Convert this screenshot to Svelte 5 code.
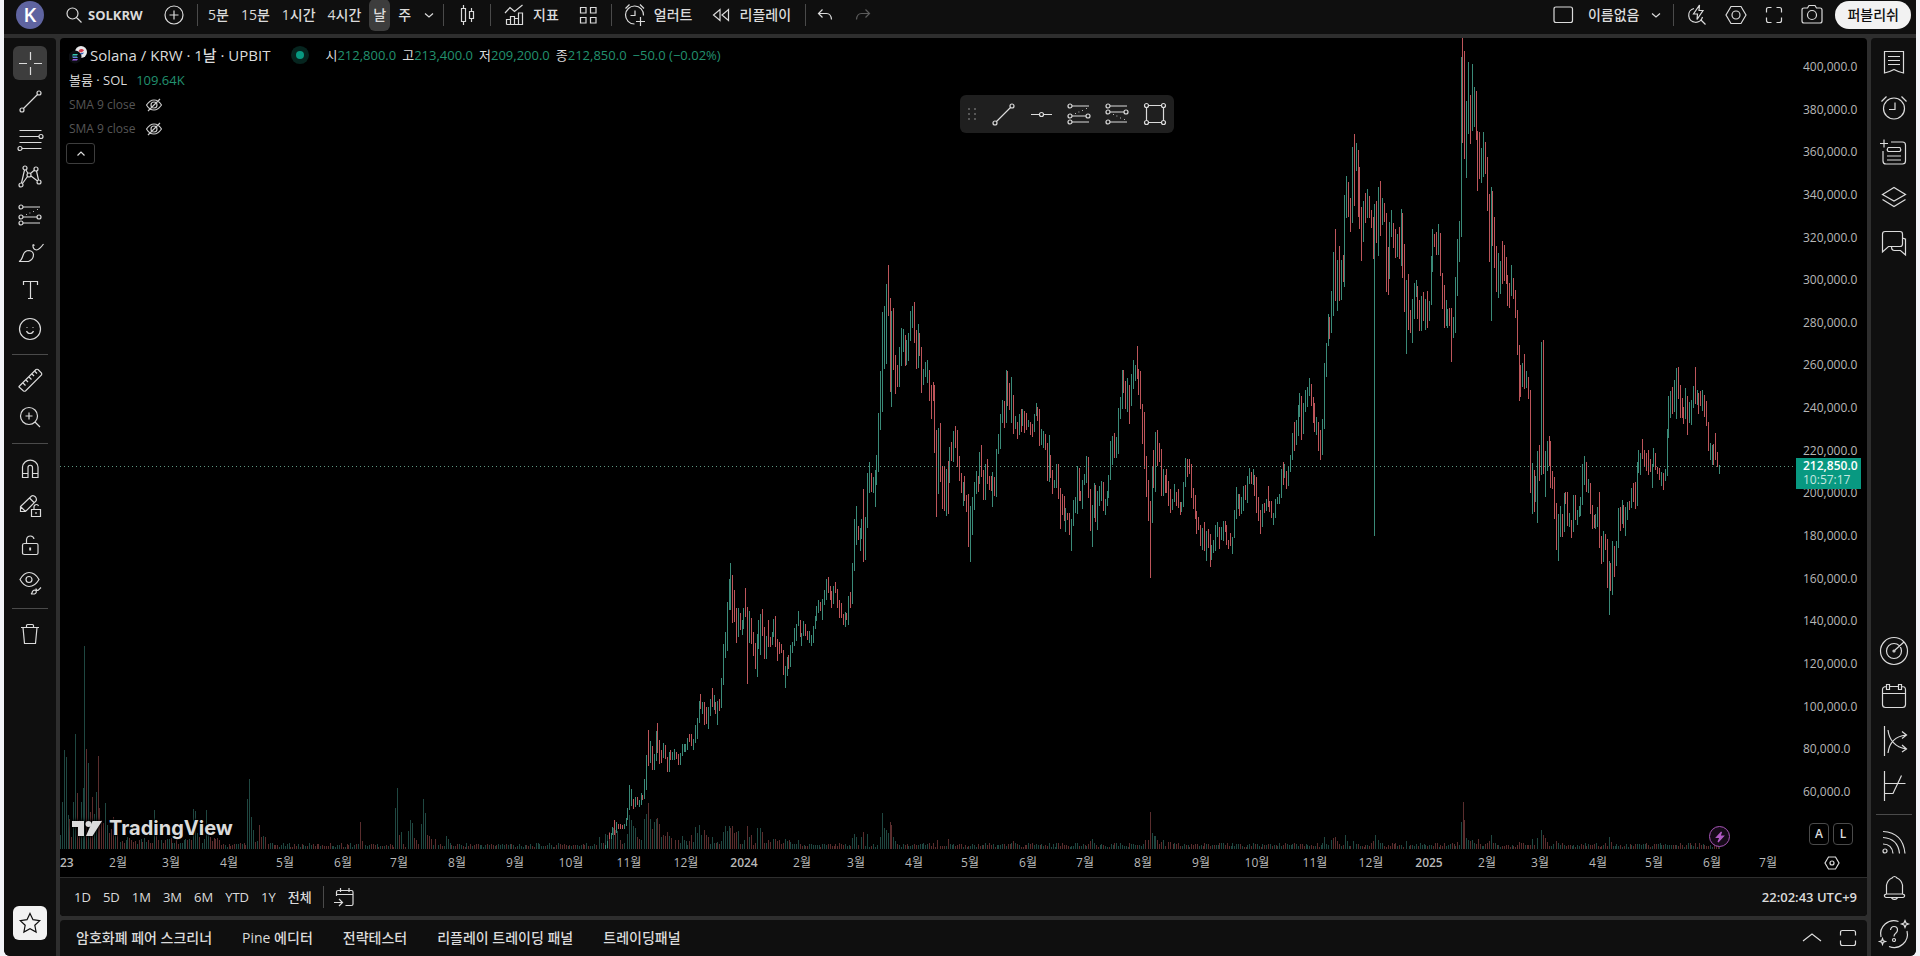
<script lang="ts">
  // circle as a path, so every icon can stay a single "d"
  const c = (x: number, y: number, r: number) =>
    `M${x - r} ${y}a${r} ${r} 0 1 0 ${r * 2} 0a${r} ${r} 0 1 0 ${-r * 2} 0`;

  const icons: Record<string, string> = {
    search: c(12.5, 12.5, 5.5) + 'M16.5 16.5l5 5',
    plus: c(14, 14, 9) + 'M14 9.5v9M9.5 14h9',
    chevronDown: 'M10 12.5l4 3.5l4-3.5',
    chevronUp: 'M10.5 15.5l3.5-3.5l3.5 3.5',
    chevronUpWide: 'M5 17l9-7l9 7',
    candles: 'M8.5 7.5h4v13h-4zM10.5 4v3.5M10.5 20.5v3.5M16.5 10.5h4v7h-4zM18.5 7v3.5M18.5 17.5v3.5',
    indicators: 'M5 12l5-5.5l4.5 4l8-6.5M6.5 23.5v-5h4v5M10.5 23.5v-8h4v8M14.5 20.5v-3h4v6M18.5 17.5v-5.5h4v11.5h-16',
    grid: 'M6.5 6.5h5.5v5.5h-5.5zM16.5 6.5h5.5v5.5h-5.5zM6.5 16.5h5.5v5.5h-5.5zM16.5 16.5h5.5v5.5h-5.5z',
    alarmPlus: 'M22.5 14.5a9 9 0 1 0-9 8.5M9.5 14.5h4.5v-5M4.5 7.5l4-4M19 3.5l4 4M19.5 16v9M15 20.5h9',
    rewind: 'M13 8.5v11l-6.5-5.5zM21.5 8.5v11l-6.5-5.5z',
    undo: 'M11.5 8.5l-4 4l4 4M7.5 12.5h8q4.500 0 5 6',
    redo: 'M16.500 8.500l4 4l-4 4M20.500 12.500h-8q-4.500 0-5 6',
    layout: 'M7 6h14.500q2 0 2 2v11.500q0 2-2 2h-14.500q-2 0-2-2v-11.500q0-2 2-2z',
    quick: 'M12 7.5a7 7 0 1 0 8.500 8.500M18.500 18.500l5 5M17.500 4l-6 9h4l-.5 5.500l6-9h-4z',
    hexagon: 'M9 5.500h10l5 8.500l-5 8.500h-10l-5-8.500z' + c(14, 14, 4),
    fullscreen: 'M6.500 11.500v-3q0-2 2-2h3M16.500 6.500h3q2 0 2 2v3M21.500 16.500v3q0 2-2 2h-3M11.500 21.500h-3q-2 0-2-2v-3',
    camera: 'M9.500 7l1.500-2.500h6l1.500 2.500h3.500q2 0 2 2v11q0 2-2 2h-16q-2 0-2-2v-11q0-2 2-2z' + c(14, 14, 4.5),
    cross: 'M14.500 3v8M14.500 18v8M3 14.500h8M18 14.500h8',
    line: c(6, 23, 2) + c(23, 6, 2) + 'M7.500 21.500l14-14',
    hline: 'M4 14.500h8M17 14.500h8' + c(14.5, 14.5, 2),
    rays: 'M3.500 5.500h22M3.500 11.500h19.500M3.500 17.500h22M6 23.500h19.500' + c(25, 11.5, 2) + c(4, 23.5, 2),
    pattern: c(9, 5, 2) + c(20, 6, 2) + c(13, 12, 2) + c(5, 22, 2) + c(23, 19, 2) +
      'M8.500 7l-3 13M10 7l2 3.500M11.500 13.500l-5 7M14.500 10.500l4-3.500M20.500 8l2 9M15 13l6.500 5',
    forecast: c(5, 6, 2) + c(5, 16, 2) + c(5, 22, 2) + c(23, 16, 2) + 'M7 6h17M7 16h14M7 22h17M10 13.500h.8M13.500 12h.8M17 10.500h.8M21 8.500h.8',
    forecastDown: c(5, 6, 2) + c(5, 12, 2) + c(5, 22, 2) + c(23, 12, 2) + 'M7 6h17M7 12h14M7 22h17M10 14.500h.8M13.500 16h.8M17 18h.8M21 19.500h.8',
    rect: c(5.5, 5.5, 2) + c(22.5, 5.5, 2) + c(5.5, 22.5, 2) + c(22.5, 22.5, 2) + 'M7.500 5.500h13M7.500 22.500h13M5.500 7.500v13M22.500 7.500v13',
    brush: 'M3 22.500q2.500-1 4-6q1.500-5 6-5q4 .5 4.500 4q0 5-5 7zM17 5.500q-.5 5 3.500 5.500q3-.5 7-6M17 5.500l1.500 1',
    text: 'M7.500 8v-3.500h14v3.500M14.500 4.500v17M12 21.500h5',
    smile: c(14, 14, 10.5) + 'M11 12v.8M17 12v.8M10.500 16q1 2.500 3.500 2.500q2.500 0 3.500-2.500',
    ruler: 'M3 20.500l17-17q1-.5 2 0l3.500 3.500q.5 1 0 2l-16 16q-1 .5-2 0l-4.500-4zM7 17l2.500 2.500M10 14l2 2M13 11l2.500 2.500M16 8l2 2M19 5.500l2 2',
    zoom: c(13, 12, 8.5) + 'M19 18l5 5M13 8.500v7M9.500 12h7',
    magnet: 'M6.500 22.500v-10.500a7.800 7.800 0 0 1 15.500 0v10.500h-5.500v-10a2.200 2.200 0 0 0-4.500 0v10zM6.500 18.500h5.500M16.500 18.500h5.500',
    pencilLock: 'M4.500 18.500v-5l11-10.500q2-1 4 1q1.500 2 .5 4l-10.500 10.500zM4.500 13.500l5 5M13.500 5l4.500 4.500M15.500 16.500h9v7h-9zM18 16.500v-3q.5-2 2.500-2q1.500 0 2 1.500M20 19v2',
    lock: 'M8.500 12.500h12q1.500 0 1.500 1.500v8q0 1.500-1.500 1.500h-12q-2 0-2-1.500v-8q0-1.500 2-1.500zM10.500 12.500v-4q.5-3.500 4-3.500q3 0 3.500 3M14.500 16.500v3M13.800 16.500v3',
    eye: 'M4 10.500q4-7 9-7q6 0 10 7q-4 7-10 7q-5 0-9-7z' + c(13, 10.5, 3) + 'M15 25q1-.5 1.500-2.500q1-2 3.500-1q1 2.500-1.500 3.500zM20 19.500q0 2 2 2l3-3',
    trash: 'M5 7.500h18M7 7.500l1.500 16h11l1.500-16M10.500 7.500v-2q0-1 1-1h5q1 0 1 1v2',
    star: 'M14 4.500l3 6.200l6.700 .9l-4.900 4.600l1.300 6.800l-6.100-3.300l-6.100 3.300l1.300-6.800l-4.900-4.600l6.700-.9z',
    eyeOff: 'M6.500 14q3.500-5 7.500-5q4.500 0 7.500 5q-3.500 5-7.500 5q-4.500 0-7.500-5z' + c(14, 14, 3) + 'M8 20l12-12',
    goTo: 'M6.500 13v-4q0-1.500 1.500-1.500h13.500q1.500 0 1.500 1.500v12q0 1.500-1.500 1.500h-6M6.500 11.500h16.500M10.500 5v4M19 5v4M4 19.500h8M9 16l3.500 3.500l-3.500 3.500',
    watchlist: 'M4.500 2.500h19v21.500q-5-1-9.500-3.500q-4.500 2.500-9.500 3.500zM8 7.500h12M8 11.500h12M8 15.500h12',
    alarm: c(14, 14.5, 10.5) + 'M9 15.500h6v-7M1.500 7.500l5-5M21.500 2.500l5 5',
    news: 'M11 3h11.500q3 0 3 3v16q0 3-3 3h-16.500q-3 0-3-3v-10M4 .5v8M0 4.500h8M8 8.500h12q1.500 2 0 4h-12q-1.500-2 0-4M7 17h14M7 21h14',
    layers: 'M2.500 10.500l11.500-7l11.500 7l-11.500 6.500zM2.500 15.500l11.500 7l11.500-7',
    chat: 'M2.500 23v-18q0-2.500 2.500-2.500h15q2.500 0 2.500 2.500v10q0 2.500-2.500 2.500h-11.500zM25.500 9.500v16.500l-5-4.500h-6q-3 0-3-4M22.500 9.500q3-.5 3 2',
    target: c(14, 14, 13.5) + c(14, 14, 7.5) + 'M15 13l9-8' + c(14, 14, 1),
    calendar: 'M2.500 11.500h23M6.500 4.500q-4 0-4 3v15q0 3 3 3h17q3 0 3-3v-15q0-3-4-3M10 4.500h8M6.500 2.500h3v5h-3zM18.500 2.500h3v5h-3z',
    curves: 'M4.500-1v30M8 26q2-16 18-18M22 4.500l4.500 3.500l-4.500 3.500M8 3q2 16 18 19M22 18l4.500 4l-4.500 3',
    step: 'M4.500-1v30M4.500 11.500h21M4.500 21.500h8.500l8.500-18',
    feed: c(5, 21, 2) + 'M3 14q9 0 10 9.500M3 7.500q15 1 16.500 16M3 1.500q20 1 22 22',
    bell: 'M6.500 19v-9q1-5 5.500-7q2.500-3 5 0q4.500 2 5.500 7v9l2 1q.5 2-1.500 2.500h-17q-2-.5-1.500-2.500zM6.500 19h16M11.500 23q3 3 6 0',
    help: 'M18.500 1.500a13.300 13.300 0 0 0-17.500 15.500M9 26.500a13.300 13.300 0 0 0 18-15.500M10.500 10q.5-3.500 3.500-3.500q3.500 0 3.500 3.500q0 2-2 3.500q-1.500 1-1.500 3' + c(14, 20, 1.5) +
      'M25 .5l1 2.500l2.500 1l-2.500 1l-1 2.500l-1-2.500l-2.500-1l2.500-1zM2.500 18.500l.8 2.200l2.200 .8l-2.200 .8l-.8 2.200l-.8-2.200l-2.200-.8l2.200-.8z',
    maximize: 'M6.500 11.500v-3q0-2 2-2h11q2 0 2 2v3M21.500 16.500v3q0 2-2 2h-11q-2 0-2-2v-3',
    gear: 'M10.500 8h7l3.500 6l-3.500 6h-7l-3.500-6z' + c(14, 14, 2),
    bolt: 'M15.500 9l-5 5.500h3.500l-2 4.500l5.500-6h-3.500z'
  };

  const intervals = ['5분', '15분', '1시간', '4시간', '날', '주'];
  const drawTools = [
    ['line', 'rays', 'pattern', 'forecast', 'brush', 'text', 'smile'],
    ['ruler', 'zoom'],
    ['magnet', 'pencilLock', 'lock', 'eye'],
    ['trash']
  ];
  const favorites = ['line', 'hline', 'forecast', 'forecastDown', 'rect'];
  const sideTop = ['watchlist', 'alarm', 'news', 'layers', 'chat'];
  const sideMid = ['target', 'calendar', 'curves', 'step'];
  const sideEnd = ['feed', 'bell', 'help'];
  const ranges = ['1D', '5D', '1M', '3M', '6M', 'YTD', '1Y', '전체'];
  const tabs = ['암호화폐 페어 스크리너', 'Pine 에디터', '전략테스터', '리플레이 트레이딩 패널', '트레이딩패널'];
  const ohlc = [['시', '212,800.0'], ['고', '213,400.0'], ['저', '209,200.0'], ['종', '212,850.0']];
  let interval = $state('날');

  const prices: string[] = [];
  for (let p = 400000; p >= 60000; p -= 20000) prices.push(p.toLocaleString('en-US') + '.0');

  // time axis: days since 2023-01-01
  const dayWidth = 1.873;
  const months: { label: string; x: number; year: boolean }[] = [];
  for (let m = 0; m <= 30; m++) {
    const days = (Date.UTC(2023, m, 1) - Date.UTC(2023, 0, 1)) / 86400000;
    const year = m % 12 === 0;
    months.push({ label: year ? String(2023 + m / 12) : (m % 12) + 1 + '월', x: Math.round(days * dayWidth), year });
  }

  // high-low bars between two x anchors, g = up, r = down
  const segments = [
    { from: 605, to: 852, bars: 'g845-849 g841-848 r833-839 g833-839 g827-835 r820-835 g822-833 r824-829 r824-829 r825-829 g824-829 g818-826 g808-820 g785-810 g789-806 r799-809 g797-807 r797-805 g800-807 g793-805 r795-800 g779-799 g755-790 r730-766 g741-763 r746-770 g754-770 g731-761 r723-753 r740-764 r750-763 g743-758 r745-759 r757-772 g752-772 r750-760 g752-760 g749-760 r752-759 r754-765 g753-765 g744-756 g744-752 g744-752 g738-750 r734-742 r734-746 g739-750 g725-743 g718-739 g701-723 r694-709 g702-714 r702-725 r707-724 g707-729 g699-716 r688-707 g695-710 r702-714 g701-725 r699-711 g678-708 g644-685 g632-658 g602-651 g579-610 g563-610 r575-623 r590-622 r608-643 g608-637 r613-630 g620-635 g608-629 r588-617 r607-684 g611-643 r618-644 r632-656 r643-669 g634-677 g620-649 g614-655 r609-636 r627-659 g636-659 r620-647 r637-647 g632-645 g619-637 r616-647 r639-661 r642-654 r644-653 r650-675 g666-688 g657-676 r655-669 g645-667 g642-653 g628-646 g624-641 g611-626 r620-637 g633-646 g621-636 r624-636 r631-640 g631-643 g635-646 g626-643 g616-629 g606-621 g600-613 r602-611 g599-620 g590-605 g579-600 r577-593 r586-600 r591-608 g586-604 r582-593 r589-608 r600-618 r603-618 r614-625 g612-627 r613-620 g596-625 r592-608 g563-604' },
    { from: 854, to: 1290, bars: 'g519-571 g506-545 r526-540 g528-551 g519-539 r489-562 g517-560 g473-528 g462-493 r473-492 g477-493 g470-507 g455-485 g413-472 g371-430 g312-412 g306-369 g284-364 r265-316 r298-392 g311-407 r308-370 r355-394 r365-387 g347-387 g328-366 g329-352 r335-366 g340-365 g333-361 g311-341 g306-328 r302-343 r330-369 g324-368 r333-356 r347-393 g369-385 g362-377 g360-383 r370-401 r385-419 r382-401 r385-453 r430-517 g428-494 r423-482 r466-509 r467-511 g469-516 r461-514 g447-483 r442-461 g431-462 r426-448 r430-467 r456-481 r473-493 g482-506 r476-501 r495-512 r494-547 g506-562 g497-535 g482-510 g471-494 r476-492 g452-484 r445-477 r470-500 g464-500 r459-484 r476-490 r476-491 g472-507 r477-496 g449-497 g434-454 g414-449 g400-423 r401-428 g370-423 r371-406 r383-410 g377-423 r395-434 g416-429 r422-439 g414-435 r409-432 g409-426 r411-433 r413-430 g420-427 r422-435 r424-437 g414-432 g403-416 r407-421 r409-446 g429-445 g431-448 r434-450 r443-481 g435-482 r455-478 r470-494 g480-488 g464-488 r464-499 r488-529 r494-515 r496-521 g508-532 r513-520 r513-535 g519-551 g500-526 g497-513 g466-514 r468-501 r491-501 g480-509 g474-485 g456-483 r457-498 r489-531 g505-547 g483-518 r485-522 g491-530 g486-506 g481-501 r482-511 g499-515 g491-506 g475-498 g441-480 g436-465 r433-458 g437-458 g408-454 g397-419 g370-409 r370-393 r381-409 g378-412 r385-424 g374-406 g360-389 g365-381 r346-379 r369-395 r371-409 r404-444 r412-469 r456-497 r480-521 r501-578 g466-523 r450-488 g432-492 r430-466 r443-462 r449-496 g469-496 r475-493 r469-493 r481-506 r489-513 g499-510 g484-502 r492-506 r489-508 r502-515 g502-512 g482-507 g458-487 r459-477 r459-474 r464-498 r488-509 r495-519 r511-534 r517-530 r525-546 g528-550 r522-551 g531-561 r529-548 r534-567 g545-560 g540-553 g525-551 g522-537 r527-549 g527-540 g521-541 r521-532 r525-545 r540-549 r533-546 g537-554 g510-538 g487-519 g494-509 r494-516 g497-514 g486-511 r485-500 g476-503 g468-484 r472-484 g469-485 r475-496 r477-513 r497-521 r510-534 g504-527 r503-513 g499-511 r486-507 r501-512 r501-518 g513-525 g499-518 g497-504 g494-504 g469-498 r462-485 g464-478 r471-489 g467-486 g455-472' },
    { from: 1292, to: 1719, bars: 'g433-460 r422-451 g420-445 g405-436 g393-417 r396-440 g403-434 g390-412 g387-407 g378-396 r384-406 r397-423 r403-432 g417-435 r422-451 r430-460 g419-455 g363-429 g343-377 g314-346 r317-339 g291-333 g252-316 r229-301 g260-311 r246-301 g260-300 r255-282 g195-287 g176-218 r182-217 r198-232 g147-223 r134-206 g143-171 r150-217 r167-229 r207-261 g201-242 r193-223 g189-218 r196-218 r210-228 r217-259 g204-536 r201-243 g187-256 r181-236 g198-225 r203-222 r213-292 r247-295 g222-279 g210-237 r223-248 r229-258 g234-257 r227-259 g209-266 r213-278 r244-312 g280-354 r274-330 r310-333 g299-343 g283-319 g280-297 r286-319 r300-331 g296-331 r292-321 g299-330 r291-328 g301-321 g256-305 g229-272 r234-247 r232-255 g224-255 r233-276 r273-309 r285-328 g300-326 g309-328 r308-326 r308-362 g317-338 g277-333 g239-296 g221-262 g57-237 r38-143 r51-159 g101-178 g62-134 r95-144 g64-131 g87-127 r91-140 r131-191 r132-179 g148-183 g132-177 r142-174 r157-211 r194-262 g187-321 r191-246 r217-268 r246-292 g253-298 g261-294 r241-284 r245-281 r257-284 r275-306 r283-308 g265-296 r278-299 r290-318 r310-355 r345-401 r365-397 g363-387 r354-389 g371-388 r377-399 r390-493 g463-514 r470-512 g476-502 g451-523 r445-481 g342-475 r340-474 g451-497 g441-471 r436-466 r441-488 r471-489 r477-519 r503-550 g514-561 g506-537 r514-537 g493-532 r492-504 r492-526 g513-527 r520-538 g495-532 r495-520 g510-525 g506-517 g497-516 g464-505 g456-485 r462-492 g479-493 r483-514 r505-529 r515-528 g514-529 g507-527 r492-548 r536-564 g531-562 r534-550 r539-588 g561-615 r563-591 g541-595 r546-577 g541-566 g508-548 r507-531 g500-524 r505-528 g507-536 g502-520 r501-510 g488-508 r483-502 r482-509 g462-506 g450-473 g453-475 r439-459 r450-466 r453-471 r450-475 r459-472 g464-488 g448-467 r453-470 r467-474 r468-480 g472-486 r473-490 g469-481 g429-476 g396-438 g391-418 r387-414 g380-412 g368-419 r367-399 r385-418 r398-418 r407-424 g388-419 r396-435 g402-423 g400-425 g386-408 r367-404 g390-405 r393-414 r391-406 g390-411 r395-417 r401-426 r422-451 g443-460 g445-465 r444-465 r433-460 r452-467 g465-474' }
  ];

  const bars = segments.flatMap(({ from, to, bars }) => {
    const list = bars.split(' ');
    const step = (to - from) / (list.length - 1);
    return list.map((b, i) => {
      const [high, low] = b.slice(1).split('-').map(Number);
      return { x: Math.round(from + i * step), high, low, up: b[0] === 'g' };
    });
  });

  // volume peaks as x:height, the quiet days in between stay low
  const peaks = 'g60:14 g62:47 g64:99 g66:92 g68:34 r69:30 r71:12 g73:47 g75:115 r77:56 r79:29 g81:47 g83:61 g84:203 r86:100 g88:86 r90:37 r92:52 g94:35 g96:57 r98:93 r99:41 r101:29 r103:26 g105:46 g107:24 r109:16 r111:20 r113:32 g115:22 r117:15 g154:39 r156:14 r158:9 g193:40 g195:38 g197:16 r199:12 g206:39 g208:15 r210:12 g247:50 g249:70 g251:32 g253:19 r255:7 g257:8 r259:24 r261:12 g263:13 r265:12 r360:27 r362:8 g395:41 g397:61 r399:14 g401:17 g408:18 g410:29 g412:26 r414:11 r416:9 g421:25 g423:50 g425:36 r427:14 r429:13 r431:10 r435:10 g446:13 g448:10 g599:12 g605:15 g607:14 r609:17 g611:13 g613:21 r615:19 g617:18 g627:15 g629:34 g631:29 g633:23 g635:21 r637:12 r639:10 g641:9 g644:30 g646:35 r648:46 g650:30 r652:20 g654:27 g656:30 r657:31 r659:25 g661:12 r663:14 r665:13 r667:17 g669:13 r671:11 r675:9 g682:13 r691:14 g695:22 g697:16 g699:24 g701:14 r704:19 r706:14 r708:12 g712:12 g723:17 g725:23 g727:18 g729:23 r730:21 r732:23 r734:16 r736:17 g738:18 r747:23 g749:12 r751:14 g757:21 g760:21 r762:17 g773:10 g852:11 g854:15 g856:12 g861:12 r863:17 g867:15 g880:12 g882:36 g884:21 g886:19 g888:16 r890:27 r891:24 g893:12 g895:8 r937:9 r948:10 r1013:8 r1090:8 g1092:10 r1145:9 r1148:9 r1150:37 g1152:16 g1154:13 g1155:13 r1157:9 r1161:7 g1163:9 r1168:7 r1170:7 g1324:12 g1331:9 r1333:11 r1335:12 r1337:8 g1345:14 g1347:8 g1353:8 r1373:8 g1375:14 g1378:9 g1380:6 g1406:8 r1457:7 g1461:27 r1463:47 r1464:29 g1466:11 g1468:9 r1470:8 g1472:9 r1478:10 r1489:8 g1491:14 r1493:6 r1519:7 g1532:10 g1537:11 g1541:19 r1543:14 r1545:11 r1547:7 r1556:8 g1609:12 r1611:7 r1695:6'
    .split(' ')
    .map((p) => {
      const [x, h] = p.slice(1).split(':').map(Number);
      return { x, h, up: p[0] === 'g' };
    });

  const volume = [...peaks];
  for (let d = 0; d < 887; d++) {
    const x = Math.round(60 + d * dayWidth);
    if (peaks.some((p) => Math.abs(p.x - x) < 2)) continue;
    const n = Math.abs(Math.sin(d * 12.9898) * 43758.5453) % 1;
    const base = x < 220 ? 5 : x > 600 && x < 800 ? 4 : 2;
    const bar = bars.find((b) => b.x === x);
    volume.push({ x, h: base + Math.round(n * (base + 2)), up: bar ? bar.up : (n * 10) % 1 > 0.5 });
  }
</script>

{#snippet icon(name: string)}
  <svg class="icon" viewBox="0 0 28 28" aria-hidden="true"><path d={icons[name]} /></svg>
{/snippet}

<div class="page">
  <header>
    <button class="profile" aria-label="Profile"><span class="avatar">K</span></button>
    <button class="symbol">{@render icon('search')}SOLKRW</button>
    <button class="tool" aria-label="Compare">{@render icon('plus')}</button>
    <i class="sep"></i>
    <div class="intervals">
      {#each intervals as item}
        <button class:active={item === interval} onclick={() => (interval = item)}>{item}</button>
      {/each}
    </div>
    <button class="more" aria-label="More intervals">{@render icon('chevronDown')}</button>
    <i class="sep"></i>
    <button class="tool" aria-label="Chart type">{@render icon('candles')}</button>
    <i class="sep"></i>
    <button class="labeled">{@render icon('indicators')}지표</button>
    <button class="tool" aria-label="Templates">{@render icon('grid')}</button>
    <i class="sep"></i>
    <button class="labeled">{@render icon('alarmPlus')}얼러트</button>
    <button class="labeled replay">{@render icon('rewind')}리플레이</button>
    <i class="sep"></i>
    <button class="history" aria-label="Undo">{@render icon('undo')}</button>
    <button class="history" aria-label="Redo" disabled>{@render icon('redo')}</button>
    <div class="spacer"></div>
    <button class="layout" aria-label="Layout">{@render icon('layout')}</button>
    <button class="name">이름없음</button>
    <button class="more last-more" aria-label="Manage layouts">{@render icon('chevronDown')}</button>
    <i class="sep"></i>
    <button class="quick" aria-label="Quick search">{@render icon('quick')}</button>
    <button class="history" aria-label="Settings">{@render icon('hexagon')}</button>
    <button class="history" aria-label="Fullscreen">{@render icon('fullscreen')}</button>
    <button class="history" aria-label="Snapshot">{@render icon('camera')}</button>
    <button class="publish">퍼블리쉬</button>
  </header>

  <div class="body">
    <nav class="draw">
      <button class="tool-btn" aria-label="cross"><span class="picked">{@render icon('cross')}</span></button>
      {#each drawTools as group, i}
        {#if i > 0}<hr />{/if}
        {#each group as name}
          <button class="tool-btn" aria-label={name}>{@render icon(name)}</button>
        {/each}
      {/each}
      <button class="tool-btn star" aria-label="Favorites"><span>{@render icon('star')}</span></button>
    </nav>

    <main>
      <section class="chart">
        <div class="plot">
          <div class="pane">
            <svg class="series" shape-rendering="crispEdges" aria-hidden="true">
              <g transform="translate(-60 -38)">
                {#each volume as v}
                  <rect class={v.up ? 'vol-up' : 'vol-down'} x={v.x} y={849 - v.h} width="1" height={v.h} />
                {/each}
                {#each bars as b}
                  <rect class={b.up ? 'up' : 'down'} x={b.x} y={b.high} width="1" height={b.low - b.high} />
                {/each}
              </g>
            </svg>
            <div class="price-line"></div>

            <div class="legend">
              <div class="title">
                <svg class="coins" viewBox="0 0 20 18" aria-hidden="true">
                  <circle cx="12" cy="6" r="6" fill="#e8e8ea" />
                  <path d="M9.500 5.500a3 3 0 0 1 5.500-1l-2.500 2z" fill="#d33a4c" />
                  <path d="M10 7.500a3 3 0 0 0 5-1l-2.500 .5z" fill="#2f5fb3" />
                  <circle cx="6" cy="11" r="6.500" fill="#0b0d12" />
                  <path d="M4 8h5l-1 1.500h-5z" fill="#35c6b0" />
                  <path d="M3 10.500h5l1 1.500h-5z" fill="#5b8fd6" />
                  <path d="M4 13h5l-1 1.500h-5z" fill="#9a5be0" />
                </svg>
                <h1>Solana / KRW · 1날 · UPBIT</h1>
                <span class="status"></span>
                <div class="values">
                  {#each ohlc as [label, value]}
                    <span>{label}<b>{value}</b></span>
                  {/each}
                  <b>−50.0 (−0.02%)</b>
                </div>
              </div>
              <div class="study">볼륨 · SOL <b>109.64K</b></div>
              <div class="study off">SMA 9 close {@render icon('eyeOff')}</div>
              <div class="study off">SMA 9 close {@render icon('eyeOff')}</div>
              <button class="collapse" aria-label="Collapse">{@render icon('chevronUp')}</button>
            </div>

            <div class="favorites">
              <span class="grip"><i></i><i></i><i></i><i></i><i></i><i></i></span>
              {#each favorites as name}
                <button aria-label={name}>{@render icon(name)}</button>
              {/each}
            </div>

            <a class="brand" href="#tradingview">
              <svg viewBox="0 0 30 15" aria-hidden="true">
                <path d="M0 0h12v15h-6v-9h-6zM20.500 15h-6.500l6.500-15h9.500z" />
                <circle cx="16.500" cy="3" r="3" />
              </svg>
              TradingView
            </a>
            <span class="event">{@render icon('bolt')}</span>
          </div>

          <div class="price-axis">
            {#each prices as price}
              <span>{price}</span>
            {/each}
            <div class="last"><strong>212,850.0</strong><span>10:57:17</span></div>
            <div class="scale"><button>A</button><button>L</button></div>
          </div>
        </div>

        <div class="time-row">
          <div class="time-axis">
            {#each months as m}
              <span class:year={m.year} style="left: {m.x}px">{m.label}</span>
            {/each}
          </div>
          <button class="axis-settings" aria-label="Axis settings">{@render icon('gear')}</button>
        </div>

        <div class="ranges">
          {#each ranges as r}
            <button>{r}</button>
          {/each}
          <i class="sep"></i>
          <button class="goto" aria-label="Go to">{@render icon('goTo')}</button>
          <button class="clock">22:02:43 UTC+9</button>
        </div>
      </section>

      <footer>
        {#each tabs as tab}
          <button>{tab}</button>
        {/each}
        <div class="spacer"></div>
        <button class="panel-btn" aria-label="Open panel">{@render icon('chevronUpWide')}</button>
        <button class="panel-btn" aria-label="Maximize panel">{@render icon('maximize')}</button>
      </footer>
    </main>

    <aside>
      {#each sideTop as name}
        <button aria-label={name}>{@render icon(name)}</button>
      {/each}
      <div class="spacer"></div>
      {#each sideMid as name}
        <button aria-label={name}>{@render icon(name)}</button>
      {/each}
      <hr />
      {#each sideEnd as name}
        <button aria-label={name}>{@render icon(name)}</button>
      {/each}
    </aside>
  </div>
</div>

<style>
  :global(body) {
    margin: 0;
    background: #f3f4f8;
  }

  .page {
    box-sizing: border-box;
    height: 100vh;
    margin: 0 4px;
    display: flex;
    flex-direction: column;
    gap: 4px;
    background: #2e2e2e;
    border-radius: 0 0 6px 6px;
    overflow: hidden;
    color: #dbdbdb;
    font: 14px/18px 'Open Sans', 'Noto Sans CJK KR', sans-serif;
  }

  button {
    flex: none;
    display: flex;
    align-items: center;
    justify-content: center;
    margin: 0;
    padding: 0;
    border: none;
    background: none;
    color: inherit;
    font: inherit;
    white-space: nowrap;
    cursor: pointer;
  }

  .icon {
    flex: none;
    width: 28px;
    height: 28px;
    fill: none;
    stroke: currentColor;
    stroke-width: 1.2;
    overflow: visible;
  }

  .spacer {
    flex: 1;
  }

  .sep {
    flex: none;
    width: 1px;
    height: 22px;
    background: #4a4a4a;
  }

  hr {
    flex: none;
    width: 36px;
    height: 1px;
    margin: 6px auto;
    border: none;
    background: #4a4a4a;
  }

  header {
    flex: none;
    display: flex;
    align-items: center;
    height: 34px;
    padding-bottom: 4px;
    box-sizing: border-box;
    background: #0f0f0f;
    font-weight: 500;
  }

  .profile {
    width: 52px;
  }

  .avatar {
    width: 28px;
    height: 28px;
    border-radius: 50%;
    background: #5f64a0;
    color: #fff;
    font-size: 20px;
    line-height: 28px;
    font-weight: 600;
  }

  .symbol {
    width: 95px;
    justify-content: flex-start;
    padding-left: 4px;
    font-size: 13px;
    font-weight: 700;
  }

  .tool {
    width: 46px;
  }

  .intervals {
    display: flex;
    gap: 4px;
    padding-left: 6px;
  }

  .intervals button {
    height: 32px;
    padding: 0 4px;
    border-radius: 6px;
  }

  .intervals .active {
    background: #3d3d3d;
  }

  .more {
    width: 28px;
  }

  .last-more {
    width: 34px;
  }

  .labeled {
    gap: 5px;
    padding: 0 6px 0 9px;
  }

  .replay {
    padding: 0 14px 0 8px;
  }

  .history {
    width: 38px;
  }

  .history:disabled {
    color: #5c5c5c;
  }

  .layout {
    width: 40px;
  }

  .name {
    padding: 0 0 0 5px;
  }

  .quick {
    width: 43px;
  }

  .publish {
    height: 28px;
    margin: 0 5px 0 4px;
    padding: 0 12px;
    border-radius: 14px;
    background: #f2f2f2;
    color: #0f0f0f;
  }

  .body {
    flex: 1;
    min-height: 0;
    display: flex;
    gap: 4px;
  }

  .draw {
    flex: none;
    width: 52px;
    box-sizing: border-box;
    padding: 6px 0 14px;
    display: flex;
    flex-direction: column;
    background: #0f0f0f;
    border-radius: 0 4px 0 0;
  }

  .tool-btn {
    width: 52px;
    height: 38px;
  }

  .tool-btn span {
    display: flex;
    align-items: center;
    justify-content: center;
    width: 34px;
    height: 34px;
    border-radius: 6px;
  }

  .picked {
    background: #3d3d3d;
  }

  .star {
    margin-top: auto;
  }

  .star span {
    background: #f2f2f2;
    color: #0f0f0f;
  }

  main {
    flex: 1;
    min-width: 0;
    display: flex;
    flex-direction: column;
    gap: 4px;
  }

  .chart {
    flex: 1;
    min-height: 0;
    display: flex;
    flex-direction: column;
    background: #000;
    border-radius: 4px;
    overflow: hidden;
  }

  .plot {
    flex: 1;
    min-height: 0;
    display: flex;
  }

  .pane {
    flex: 1;
    position: relative;
    overflow: hidden;
  }

  .series {
    display: block;
    width: 100%;
    height: 100%;
  }

  .up {
    fill: #3a8a78;
  }

  .down {
    fill: #bd555a;
  }

  .vol-up {
    fill: #1f4741;
  }

  .vol-down {
    fill: #5a2d2d;
  }

  .price-line {
    position: absolute;
    top: 428px;
    left: 0;
    right: 0;
    height: 1px;
    background: repeating-linear-gradient(90deg, #5c9580 0 1px, transparent 1px 4px);
  }

  .legend {
    position: absolute;
    top: 5px;
    left: 6px;
  }

  .title {
    display: flex;
    align-items: center;
    height: 24px;
    padding-left: 3px;
  }

  .coins {
    width: 20px;
    height: 18px;
    margin-right: 1px;
  }

  h1 {
    margin: 0;
    font-size: 15px;
    line-height: 20px;
    font-weight: 500;
  }

  .status {
    width: 8px;
    height: 8px;
    margin: 0 21px 0 26px;
    border-radius: 50%;
    background: #089981;
    box-shadow: 0 0 0 5px #06251f;
  }

  .values {
    display: flex;
    gap: 6px;
    font-size: 13px;
  }

  .legend b {
    color: #22916f;
    font-weight: 400;
  }

  .study {
    display: flex;
    align-items: center;
    height: 24px;
    padding-left: 3px;
    font-size: 13px;
  }

  .title + .study {
    height: 26px;
  }

  .study b {
    margin-left: 9px;
  }

  .study.off {
    gap: 4px;
    color: #555;
    font-size: 12px;
  }

  .study .icon {
    color: #c8c8c8;
  }

  .collapse {
    width: 29px;
    height: 21px;
    margin-top: 2px;
    border: 1px solid #3d3d3d;
    border-radius: 3px;
  }

  .favorites {
    position: absolute;
    top: 57px;
    left: 900px;
    display: flex;
    height: 38px;
    border-radius: 6px;
    background: #1f1f1f;
  }

  .favorites button {
    width: 38px;
  }

  .grip {
    width: 24px;
    display: grid;
    grid-template-columns: 2px 2px;
    gap: 3px 4px;
    place-content: center;
  }

  .grip i {
    width: 2px;
    height: 2px;
    background: #575757;
  }

  .brand {
    position: absolute;
    left: 12px;
    bottom: 8px;
    display: flex;
    align-items: center;
    gap: 7px;
    color: #dbdbdb;
    font: 700 20px/26px Inter, sans-serif;
    text-decoration: none;
    text-shadow: 0 0 2px #000, 0 0 2px #000, 0 0 3px #000, 0 0 3px #000;
  }

  .brand svg {
    width: 30px;
    height: 15px;
    fill: currentColor;
    filter: drop-shadow(0 0 2px #000) drop-shadow(0 0 1px #000);
  }

  .event {
    position: absolute;
    right: 66px;
    bottom: 2px;
    display: flex;
    align-items: center;
    justify-content: center;
    width: 19px;
    height: 19px;
    border: 1px solid #a855b8;
    border-radius: 50%;
    background: #150a18;
    color: #b05bc4;
  }

  .event .icon {
    fill: currentColor;
  }

  .price-axis {
    position: relative;
    flex: none;
    width: 71px;
    box-sizing: border-box;
    padding: 22px 0 50px 7px;
    display: flex;
    flex-direction: column;
    justify-content: space-between;
    color: #b8b8b8;
    font-size: 12px;
    line-height: 14px;
  }

  .last {
    position: absolute;
    top: 420px;
    left: 0;
    width: 65px;
    height: 31px;
    box-sizing: border-box;
    padding: 1px 0 0 7px;
    display: flex;
    flex-direction: column;
    background: #089981;
    color: #fff;
  }

  .last strong {
    font-weight: 600;
  }

  .last span {
    color: #c5e8e0;
  }

  .scale {
    position: absolute;
    left: 13px;
    bottom: 4px;
    display: flex;
    gap: 4px;
    color: #dbdbdb;
  }

  .scale button {
    width: 20px;
    height: 22px;
    border: 1px solid #4a4a4a;
    border-radius: 4px;
    font-weight: 600;
  }

  .time-row {
    flex: none;
    display: flex;
    height: 28px;
    border-bottom: 1px solid #2e2e2e;
  }

  .time-axis {
    flex: 1;
    position: relative;
    overflow: hidden;
    color: #b8b8b8;
    font-size: 12px;
    line-height: 28px;
  }

  .time-axis span {
    position: absolute;
    transform: translateX(-50%);
  }

  .time-axis .year {
    font-weight: 600;
  }

  .axis-settings {
    width: 71px;
  }

  .ranges {
    flex: none;
    display: flex;
    align-items: center;
    height: 38px;
    padding: 0 10px 0 8px;
    background: #0f0f0f;
    font-size: 13px;
    font-weight: 500;
  }

  .ranges button {
    padding: 0 6px;
  }

  .ranges .sep {
    margin-left: 5px;
  }

  .ranges .goto {
    padding: 0 6px;
  }

  .ranges .clock {
    margin-left: auto;
    padding: 0;
    font-weight: 600;
  }

  footer {
    flex: none;
    display: flex;
    align-items: center;
    height: 36px;
    padding-left: 1px;
    background: #0f0f0f;
    border-radius: 4px 4px 0 0;
    font-weight: 500;
    font-size: 14px;
  }

  footer button {
    padding: 0 15px;
  }

  footer .panel-btn {
    width: 36px;
    padding: 0;
  }

  .panel-btn:last-child {
    margin-right: 1px;
  }

  aside {
    flex: none;
    width: 45px;
    box-sizing: border-box;
    padding-top: 2px;
    display: flex;
    flex-direction: column;
    background: #0f0f0f;
    border-radius: 4px 0 0 0;
  }

  aside button {
    height: 45px;
  }
</style>
